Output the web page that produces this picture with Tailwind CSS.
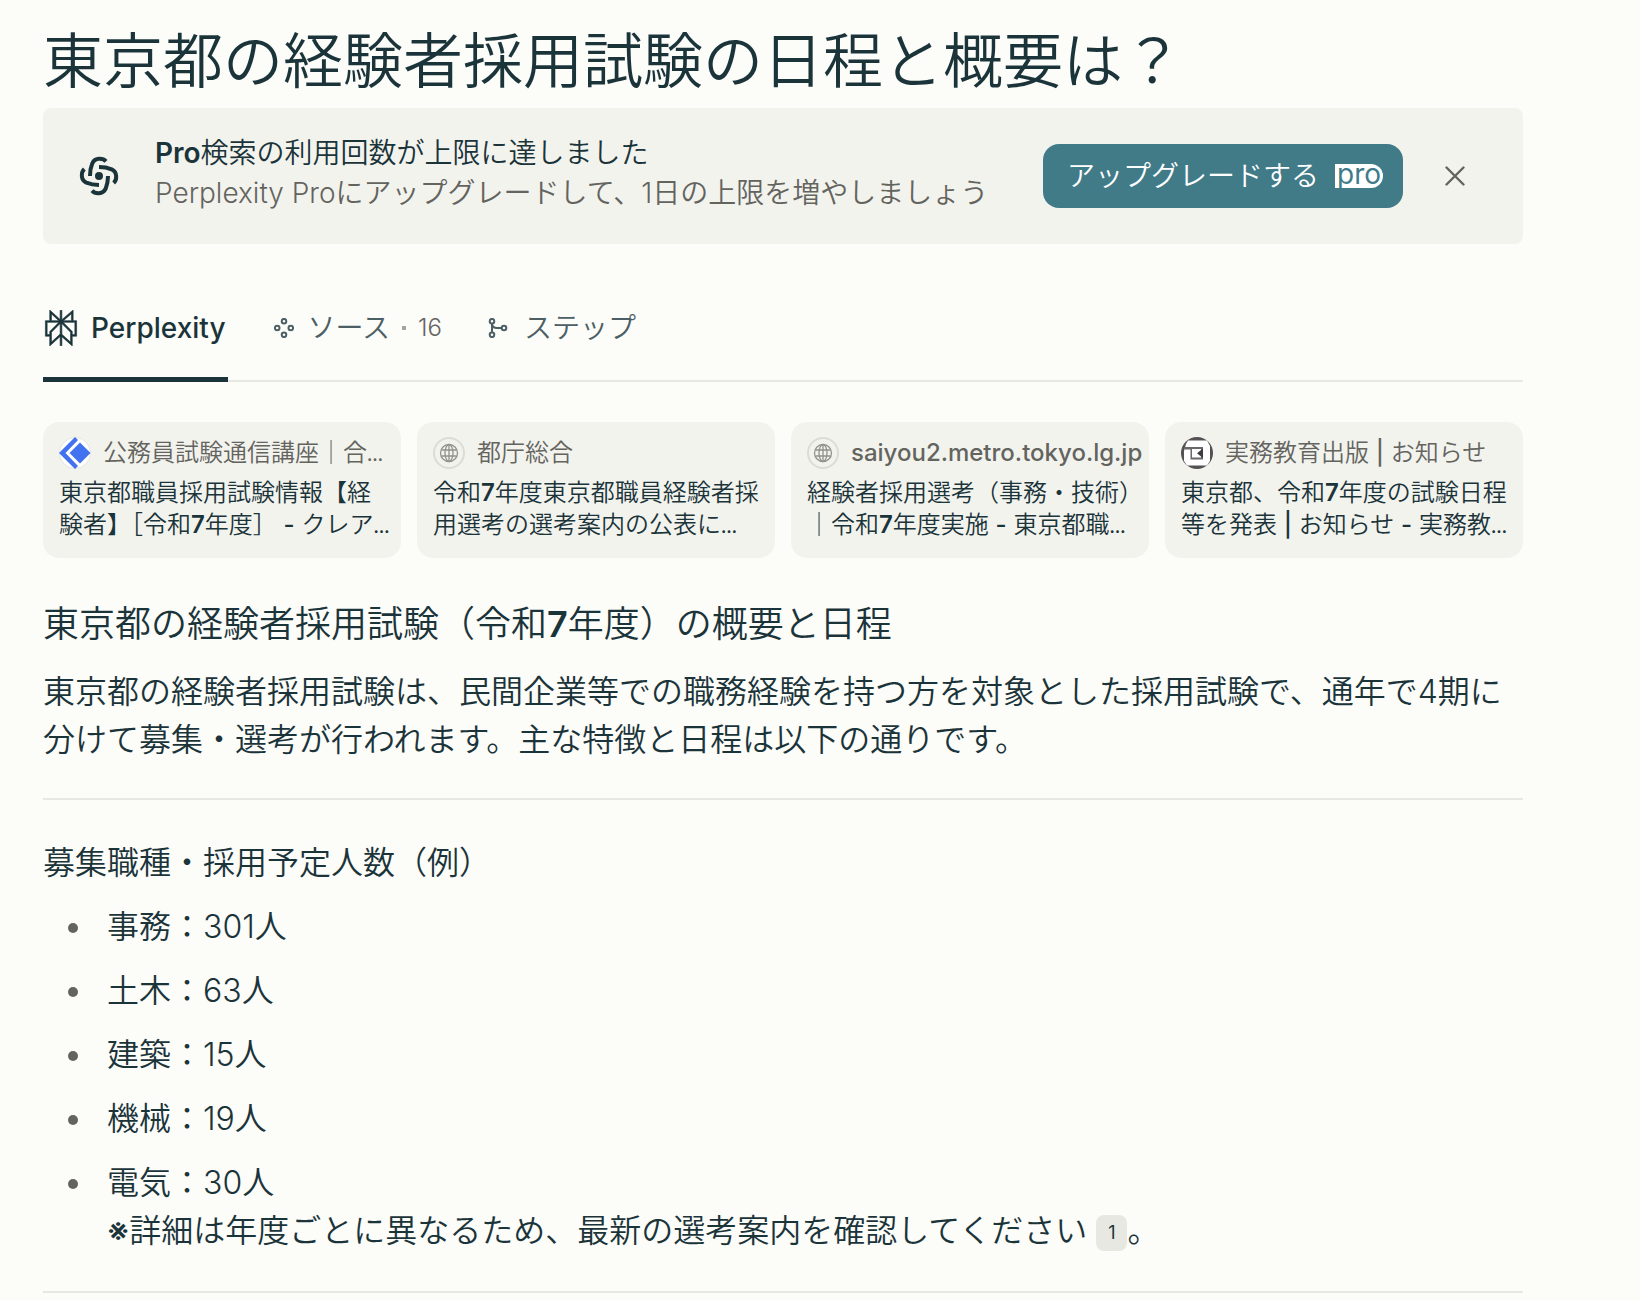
<!DOCTYPE html>
<html lang="ja">
<head>
    <meta charset="UTF-8">
    <meta name="viewport" content="width=device-width, initial-scale=1.0">
    <script src="https://cdn.jsdelivr.net/npm/@tailwindcss/browser@4"></script>
    <title>東京都の経験者採用試験の日程と概要は？ - Perplexity</title>
</head>
<body class="bg-[#fcfcf9] text-[#1b343a] font-['Inter','Noto_Sans_CJK_JP',sans-serif] font-[350]">
    <main class="ml-[43px] mr-[117px] pt-[23px]">
        <h1 class="text-[60px] leading-[76px]">東京都の経験者採用試験の日程と概要は？</h1>

        <!-- Upgrade banner -->
        <section class="mt-[9px] flex items-center rounded-lg bg-[#f3f3ee] h-[136px] pl-9 pr-[52px]">
            <svg class="size-10 shrink-0" viewBox="-60 -60 120 120" fill="none" stroke="currentColor" stroke-width="12">
                <circle r="12" fill="currentColor" stroke="none" />
                <path d="M21 -44C12 -54 -12 -56 -20 -38C-25 -26 -27 -14 -27 0" />
                <path d="M21 -44C12 -54 -12 -56 -20 -38C-25 -26 -27 -14 -27 0" transform="rotate(90)" />
                <path d="M21 -44C12 -54 -12 -56 -20 -38C-25 -26 -27 -14 -27 0" transform="rotate(180)" />
                <path d="M21 -44C12 -54 -12 -56 -20 -38C-25 -26 -27 -14 -27 0" transform="rotate(270)" />
            </svg>
            <div class="ml-9 pb-1.5 text-[28px] leading-10">
                <p><span class="font-semibold">Pro</span>検索の利用回数が上限に達しました</p>
                <p class="text-[#64645f]">Perplexity Proにアップグレードして、1日の上限を増やしましょう</p>
            </div>
            <button class="ml-auto flex h-16 items-center gap-4 rounded-2xl bg-[#417b88] pl-6 pr-5 text-[28px] text-white">
                アップグレードする
                <span class="flex h-6 w-12 items-center justify-center rounded-r-full bg-white pb-1 text-[28px] leading-6 font-normal text-[#417b88]">pro</span>
            </button>
            <button class="ml-9 p-1 text-[#64645f]" aria-label="閉じる">
                <svg class="size-6" viewBox="0 0 24 24" fill="none" stroke="currentColor" stroke-width="2.400" stroke-linecap="round">
                    <path d="M3.500 3.500L20.500 20.500M20.500 3.500L3.500 20.500" />
                </svg>
            </button>
        </section>

        <!-- Tabs -->
        <nav class="mt-[38px] flex h-[100px] gap-[46px] border-b-2 border-[#e8e8e3] text-[28px]">
            <a href="#" class="-mb-0.5 flex items-center gap-3 border-b-[5px] border-current pr-0.5 pb-1 font-medium">
                <svg class="size-9" viewBox="0 0 24 24" fill="currentColor" stroke="currentColor" stroke-width=".4">
                    <path d="M22.3977 7.0896h-2.3106V.0676l-7.5094 6.3542V.1577h-1.1554v6.1966L4.4904 0v7.0896H1.6023v10.3976h2.8882V24l6.932-6.3591v6.2005h1.1554v-6.0469l6.9318 6.1807v-6.4879h2.8882V7.0896zm-3.4657-4.531v4.531h-5.355l5.355-4.531zm-13.2862.0676 4.8691 4.4634H5.6458V2.6262zM2.7576 16.332V8.245h7.8476l-6.1149 6.1147v1.9723H2.7576zm2.8882 5.0404v-3.8852h.0001v-2.6488l5.7763-5.7764v7.0111l-5.7764 5.2993zm12.7086.0248-5.7766-5.1509V9.0618l5.7766 5.7766v6.5588zm2.8882-5.0652h-1.733v-1.9723L13.3948 8.245h7.8478v8.087z" />
                </svg>
                Perplexity
            </a>
            <a href="#" class="flex items-center gap-3.5 pb-[7px] text-[#4b5f64]">
                <svg class="size-5" viewBox="0 0 20 20" fill="none" stroke="currentColor" stroke-width="2">
                    <circle cx="10" cy="3.200" r="2.300" />
                    <circle cx="3.200" cy="10" r="2.300" />
                    <circle cx="16.800" cy="10" r="2.300" />
                    <circle cx="10" cy="16.800" r="2.300" />
                </svg>
                <span class="flex items-center gap-3">ソース
                    <span class="size-1 bg-[#a5a5a0]"></span>
                    <span class="text-2xl text-[#64645f]">16</span>
                </span>
            </a>
            <a href="#" class="flex items-center gap-4 pb-[7px] text-[#4b5f64]">
                <svg class="size-5" viewBox="0 0 20 20" fill="none" stroke="currentColor" stroke-width="2">
                    <circle cx="4" cy="3.200" r="2.300" />
                    <circle cx="4" cy="16.800" r="2.300" />
                    <circle cx="16" cy="10" r="2.300" />
                    <path d="M4 5.500V14.500M4 6C4.500 9 6 10 9 10H13.700" />
                </svg>
                ステップ
            </a>
        </nav>

        <!-- Source cards -->
        <div class="mt-10 grid grid-cols-4 gap-4 text-2xl leading-8">
            <a href="#" class="h-[136px] rounded-2xl bg-[#f3f3ee] pt-[15px] pr-2 pl-4">
                <div class="flex items-center gap-3 text-[#64645f]">
                    <svg class="size-8 shrink-0" viewBox="0 0 32 32">
                        <circle cx="16" cy="16" r="15.500" fill="#fff" stroke="#e5e5e0" />
                        <path d="M16 0L19 3L6.500 16L19 29L16 32L0 16Z" fill="#4272ef" />
                        <path d="M21 5.500L31.500 16L21 26.500L10.500 16Z" fill="#4272ef" />
                    </svg>
                    <span class="whitespace-nowrap">公務員試験通信講座｜合<span class="text-base font-bold">…</span></span>
                </div>
                <p class="mt-2">東京都職員採用試験情報【経験者】［令和<span class="font-semibold">7</span>年度］ <span class="font-medium">-</span> クレア<span class="text-base font-bold">…</span></p>
            </a>
            <a href="#" class="h-[136px] rounded-2xl bg-[#f3f3ee] pt-[15px] pr-2 pl-4">
                <div class="flex items-center gap-3 text-[#64645f]">
                    <svg class="size-8 shrink-0" viewBox="0 0 32 32" fill="none" stroke="#92928d" stroke-width="1.300">
                        <circle cx="16" cy="16" r="15" stroke="#dcdcd7" stroke-width="2" />
                        <circle cx="16" cy="16" r="8.500" />
                        <ellipse cx="16" cy="16" rx="4" ry="8.500" />
                        <path d="M16 7.500V24.500M8.500 13H23.500M8.500 19H23.500" />
                    </svg>
                    <span class="whitespace-nowrap">都庁総合</span>
                </div>
                <p class="mt-2">令和<span class="font-semibold">7</span>年度東京都職員経験者採用選考の選考案内の公表に<span class="text-base font-bold">…</span></p>
            </a>
            <a href="#" class="h-[136px] rounded-2xl bg-[#f3f3ee] pt-[15px] pr-2 pl-4">
                <div class="flex items-center gap-3 text-[#64645f]">
                    <svg class="size-8 shrink-0" viewBox="0 0 32 32" fill="none" stroke="#92928d" stroke-width="1.300">
                        <circle cx="16" cy="16" r="15" stroke="#dcdcd7" stroke-width="2" />
                        <circle cx="16" cy="16" r="8.500" />
                        <ellipse cx="16" cy="16" rx="4" ry="8.500" />
                        <path d="M16 7.500V24.500M8.500 13H23.500M8.500 19H23.500" />
                    </svg>
                    <span class="whitespace-nowrap font-medium">saiyou2.metro.tokyo.lg.jp</span>
                </div>
                <p class="mt-2">経験者採用選考（事務・技術）｜令和<span class="font-semibold">7</span>年度実施 <span class="font-medium">-</span> 東京都職<span class="text-base font-bold">…</span></p>
            </a>
            <a href="#" class="h-[136px] rounded-2xl bg-[#f3f3ee] pt-[15px] pr-2 pl-4">
                <div class="flex items-center gap-3 text-[#64645f]">
                    <svg class="size-8 shrink-0" viewBox="0 0 32 32">
                        <circle cx="16" cy="16" r="16" fill="#555053" />
                        <path d="M7 3.500H26L29 9V24L26 28.500H6L3 24V14L5 7Z" fill="#fff" />
                        <path d="M3 10H22V22.500H9.500V12.500H3.500Z" fill="#6b666a" />
                        <path d="M11 12H20V20.500H11Z" fill="#fff" />
                        <path d="M22 11.500V21L16 16.200Z" fill="#3f3a3e" />
                    </svg>
                    <span class="whitespace-nowrap">実務教育出版 <span class="font-medium">|</span> お知らせ</span>
                </div>
                <p class="mt-2">東京都、令和<span class="font-semibold">7</span>年度の試験日程等を発表 <span class="font-medium">|</span> お知らせ <span class="font-medium">-</span> 実務教<span class="text-base font-bold">…</span></p>
            </a>
        </div>

        <!-- Answer -->
        <article class="text-[32px] leading-[48px]">
            <h2 class="mt-10 text-4xl leading-[52px]">東京都の経験者採用試験（令和<span class="font-semibold">7</span>年度）の概要と日程</h2>
            <p class="mt-[18px]">東京都の経験者採用試験は、民間企業等での職務経験を持つ方を対象とした採用試験で、通年で4期に分けて募集・選考が行われます。主な特徴と日程は以下の通りです。</p>
            <hr class="mt-[34px] border-t-2 border-[#e8e8e3]">
            <h3 class="mt-[39px]">募集職種・採用予定人数（例）</h3>
            <ul class="mt-4 space-y-4 pl-[25px] *:flex *:before:mt-5 *:before:mr-[29px] *:before:size-2.5 *:before:shrink-0 *:before:rounded-full *:before:bg-[#64645f]">
                <li><p>事務：301人</p></li>
                <li><p>土木：63人</p></li>
                <li><p>建築：15人</p></li>
                <li><p>機械：19人</p></li>
                <li><p>電気：30人<br><span class="font-medium">※</span>詳細は年度ごとに異なるため、最新の選考案内を確認してください <a href="#" class="inline-flex h-9 w-[31px] items-center justify-center rounded-lg bg-[#e8e8e3] align-middle text-lg font-normal">1</a>。</p></li>
            </ul>
            <hr class="mt-9 border-t-2 border-[#e8e8e3]">
        </article>
    </main>
</body>
</html>
